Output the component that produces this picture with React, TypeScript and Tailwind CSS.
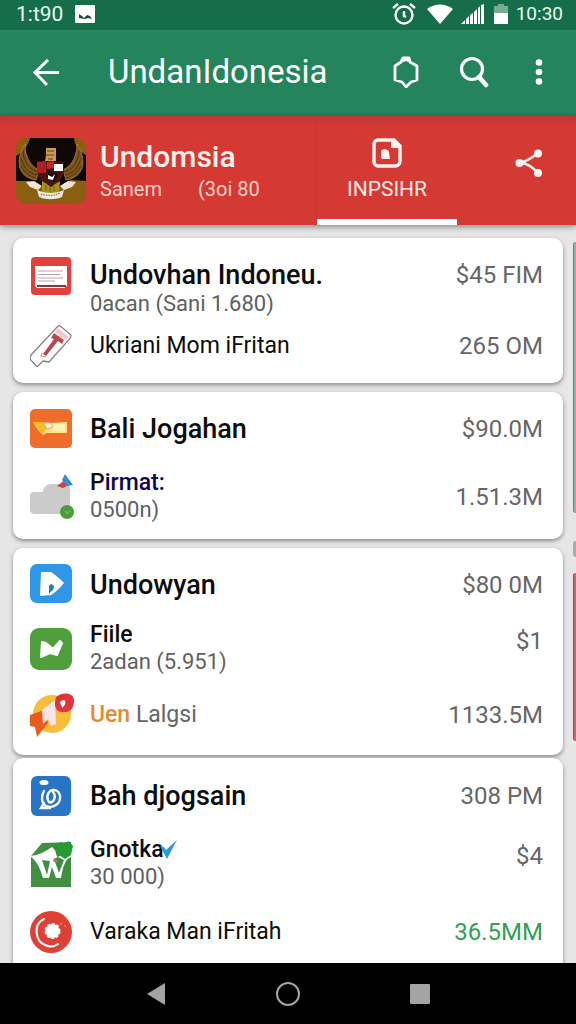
import type { ReactNode } from "react";
import clsx from "clsx";

type Row = {
  id: string;
  icon: ReactNode;
  title: ReactNode;
  subtitle?: string;
  amount: string;
  primary?: boolean;
  alignTop?: boolean;
  amountTop?: boolean;
  positive?: boolean;
  className?: string;
};

type CardGroup = {
  id: string;
  className: string;
  rows: Row[];
};

function GarudaEmblem() {
  return (
    <svg viewBox="0 0 70 66" className="h-[66px] w-[70px] shrink-0 rounded-[10px]" aria-hidden="true">
      <rect width="70" height="66" fill="#8a5f12" />
      <path d="M0 18C7 14 12 8 14 0h44c1 9 6 14 12 17v26L54 42 35 54 14 43H0z" fill="#0d0805" />
      <g fill="#7d551d" stroke="#bd8742" strokeWidth="0.7">
        <path d="M9 6C-1 22 1 39 20 42l3-10C13 27 9 17 9 6z" />
        <path d="M61 6c10 16 8 33-11 36l-3-10c10-5 14-15 14-26z" />
      </g>
      <g fill="none" stroke="#3f270a" strokeWidth="0.8">
        <path d="M7 13c1 12 6 18 15 21M5 20c2 9 7 15 16 17M5 28c4 7 8 10 15 12" />
        <path d="M63 13c-1 12-6 18-15 21M65 20c-2 9-7 15-16 17M65 28c-4 7-8 10-15 12" />
      </g>
      <path d="M30 10h10v13H29l1-6z" fill="#c79a4e" />
      <path d="M31 13h7M30 17h8M32 21h5" stroke="#6b4515" />
      <path d="M21 24l14-1 13 1v9c0 7-7 12-13 15-6-3-14-7-14-15z" fill="#4a120e" />
      <path d="M21 24l9-1v12h-9z" fill="#b51d24" />
      <path d="M31 24l7-1v7l-7 1z" fill="#cf2028" />
      <path d="M38 26h9v7h-9z" fill="#fff" />
      <path d="M31 31l6 3 5 2-3 8-6-3z" fill="#150b08" />
      <path d="M32 37l4 2 3-3-2 6-5-1z" fill="#fff" />
      <path d="M26 43l5 3 4 3 4-3 5-3-1 12H26z" fill="#a8901f" />
      <path d="M30 47v6M34 49v5M38 48v5" stroke="#6b5510" strokeWidth="0.8" />
      <path d="M10 44l8-1 8 5-4 4-8-3zM60 44l-8-1-8 5 4 4 8-3z" fill="#eee4cf" />
      <path d="M21 52c9 4 18 4 27 0l-2 7c-7 3-16 3-23 0z" fill="#eee9dc" />
      <path d="M25 56c6 2 13 2 19-1" fill="none" stroke="#8d8578" strokeWidth="1.4" strokeDasharray="1.5 1" />
    </svg>
  );
}

function RedDocumentIcon() {
  return (
    <svg viewBox="0 0 42 42" className="size-[42px]" aria-hidden="true">
      <rect x="1" y="1" width="40" height="38" rx="4" fill="#e2403b" />
      <path d="M5 10h32v20l-3 2H7l-2-2z" fill="#fff" />
      <path d="M8 15h25M8 18.5h22M8 22h25M8 25h17" stroke="#b9a4a7" strokeWidth="1" />
      <path d="M7 30h29" stroke="#74232e" strokeWidth="1.8" />
    </svg>
  );
}

function TicketIcon() {
  return (
    <svg viewBox="0 0 42 42" className="size-[42px]" aria-hidden="true">
      <path
        d="M29 0l12 10c0 4-4 6-6 9L19 37l-6-1-6 6-7-8 1-4z"
        fill="#fff"
        stroke="#85838a"
        strokeWidth="1.3"
        strokeLinejoin="round"
      />
      <path d="M28 3l11 9-4 3-10-8z" fill="#f0c9ce" />
      <path d="M24 8l10 7-2 4-4-3-12 15-3-2 11-15-3-1z" fill="#b54b50" />
      <path d="M12 28l-1 3 5 1" fill="none" stroke="#d9999c" strokeWidth="1.2" />
    </svg>
  );
}

function OrangeCardIcon() {
  return (
    <svg viewBox="0 0 42 42" className="size-[42px]" aria-hidden="true">
      <rect y="1" width="42" height="39" rx="5" fill="#f06c2b" />
      <path d="M3 14l18 1 16-1v11H17l-4 2-5-5z" fill="#ffe277" />
      <path d="M3 14h9l6 5-5 7-5-5z" fill="#f8bd22" />
      <path d="M23 15h12v8l-13 1z" fill="#fff2b5" />
      <path d="M14 16c3-3 8-1 9 3l-6 2z" fill="#fff5dc" stroke="#e1a078" />
    </svg>
  );
}

function CloudIcon() {
  return (
    <svg viewBox="0 0 44 46" className="h-[46px] w-[44px]" aria-hidden="true">
      <path d="M4 18h9c0-4 3-8 8-8h15c3 0 4 2 4 5v25H5c-3 0-5-2-5-4V22c0-3 1-4 4-4z" fill="#cbcbcc" />
      <path d="M27 12l8-6 4 5-6 3z" fill="#cf3e51" />
      <path d="M35 0l8 11-6 1-5-6z" fill="#3b8bd0" />
      <circle cx="37" cy="38" r="7" fill="#4a9c3b" />
      <path d="M35 37l2 2 3-2" fill="none" stroke="#72bd60" strokeWidth="1.5" />
    </svg>
  );
}

function PlayIcon() {
  return (
    <svg viewBox="0 0 42 42" className="size-[42px]" aria-hidden="true">
      <rect width="42" height="39" rx="7" fill="#2f97e5" />
      <path d="M11 8h10c5 3 9 7 13 11-4 5-8 9-13 12l-11 1z" fill="#fff" />
      <path d="M19 22c1-3 5-2 5 1 0 3-3 4-5 7z" fill="#227fbe" />
    </svg>
  );
}

function GreenMapIcon() {
  return (
    <svg viewBox="0 0 42 42" className="size-[42px]" aria-hidden="true">
      <rect width="42" height="42" rx="9" fill="#4fa03c" />
      <path
        d="M12 14l4 1 7 6 7-8 2 2-5 12-7-2-9 4z"
        fill="#fff"
        stroke="#fff"
        strokeWidth="2"
        strokeLinejoin="round"
      />
    </svg>
  );
}

function MegaphoneIcon() {
  return (
    <svg viewBox="0 0 45 44" className="h-[44px] w-[45px]" aria-hidden="true">
      <circle cx="22" cy="21" r="19" fill="#f8bd3b" />
      <path d="M0 22l14-5 4 13-11 14-2-10-5-1z" fill="#e85b1c" />
      <path d="M12 17L25 7l1 24-5 2-3-7-5 5z" fill="#f6e5e9" />
      <path d="M26 4c7-6 18-4 18 3 0 6-2 12-9 12-8 1-12-4-9-15z" fill="#e0333b" />
      <path d="M31 8c4-3 6 1 3 5l-2 2c0-3-3-4-1-7z" fill="#fff" />
    </svg>
  );
}

function BlueSwirlIcon() {
  return (
    <svg viewBox="0 0 42 42" className="size-[42px]" aria-hidden="true">
      <rect x="1" y="1" width="40" height="40" rx="6" fill="#2874c7" />
      <ellipse cx="14" cy="7.500" rx="4.500" ry="2.600" fill="#fff" />
      <path
        d="M14 16c-3 5-3 12 2 15 8 3 15-3 14-10-1-7-9-8-12-2-2 5 1 10 4 8 3-2 4-7 1-10M14 28l-3 5h9"
        fill="none"
        stroke="#fff"
        strokeWidth="2.4"
        strokeLinecap="round"
      />
    </svg>
  );
}

function GreenBagIcon() {
  return (
    <svg viewBox="0 0 43 48" className="h-[48px] w-[43px]" aria-hidden="true">
      <path d="M1 16L12 3l29-1v45H1z" fill="#418f42" />
      <path d="M0 16c10-1 16-5 22-9l3 3 2 7 14-4v4c-6 2-8 10-10 21h-5l-4-11-3 11h-6C10 28 7 21 0 16z" fill="#fff" />
      <path d="M12 20l5 15 3-14zM24 19l5 14 5-13-6-3z" fill="#3e8e41" />
      <path d="M23 7l8-5 3 2 5-3 4 5-2 9-6 4-6-4z" fill="#289a34" />
      <path d="M24 18l4 3-2 2-3-2z" fill="#b8716c" />
    </svg>
  );
}

function RedRecordIcon() {
  return (
    <svg viewBox="0 0 42 42" className="size-[42px]" aria-hidden="true">
      <circle cx="21" cy="21" r="21" fill="#df4036" />
      <path d="M14 8C3 13 5 30 15 34c4 2 9 2 13-1" fill="none" stroke="#fff" strokeWidth="2" strokeLinecap="round" />
      <circle cx="22.500" cy="20" r="7" fill="#fff" stroke="#fff" strokeWidth="2" strokeDasharray="3 1.6" />
      <circle cx="31" cy="13" r="1" fill="#f17d75" />
      <circle cx="35" cy="15" r="1" fill="#f17d75" />
    </svg>
  );
}

const groups: CardGroup[] = [
  {
    id: "undovhan",
    className: "pt-[18px] pb-4",
    rows: [
      {
        id: "undovhan-indoneu",
        icon: <RedDocumentIcon />,
        title: "Undovhan Indoneu.",
        subtitle: "0acan (Sani 1.680)",
        amount: "$45 FIM",
        primary: true,
        alignTop: true,
        amountTop: true,
      },
      { id: "ukriani", icon: <TicketIcon />, title: "Ukriani Mom iFritan", amount: "265 OM", className: "mt-[7px]" },
    ],
  },
  {
    id: "bali",
    className: "mt-[9px] pt-4 pb-[15px]",
    rows: [
      { id: "bali-jogahan", icon: <OrangeCardIcon />, title: "Bali Jogahan", amount: "$90.0M", primary: true },
      {
        id: "pirmat",
        icon: <CloudIcon />,
        title: (
          <span className="font-medium">
            P<span className="text-[#0b0657]">irmat:</span>
          </span>
        ),
        subtitle: "0500n)",
        amount: "1.51.3M",
        className: "mt-5",
      },
    ],
  },
  {
    id: "undowyan",
    className: "mt-[9px] pt-4 pb-[19px]",
    rows: [
      { id: "undowyan-main", icon: <PlayIcon />, title: "Undowyan", amount: "$80 0M", primary: true },
      {
        id: "fiile",
        icon: <GreenMapIcon />,
        title: <span className="font-medium">Fiile</span>,
        subtitle: "2adan (5.951)",
        amount: "$1",
        amountTop: true,
        className: "mt-4",
      },
      {
        id: "uen",
        icon: <MegaphoneIcon />,
        title: (
          <span className="text-[#666]">
            <span className="font-medium text-[#e58a32]">Uen</span> Lalgsi
          </span>
        ),
        amount: "1133.5M",
        className: "mt-[18px]",
      },
    ],
  },
  {
    id: "bah",
    className: "mt-[3px] pt-[17px] pb-5",
    rows: [
      { id: "bah-djogsain", icon: <BlueSwirlIcon />, title: "Bah djogsain", amount: "308 PM", primary: true },
      {
        id: "gnotka",
        icon: <GreenBagIcon />,
        title: (
          <span className="flex items-center font-medium">
            Gnotka
            <svg viewBox="0 0 18 20" className="-ml-1 h-5 w-[18px]" aria-hidden="true">
              <path d="M0 6c3 0 5 2 6 4L17 0 7 19z" fill="#2f96e0" />
            </svg>
          </span>
        ),
        subtitle: "30 000)",
        amount: "$4",
        amountTop: true,
        className: "mt-5",
      },
      {
        id: "varaka",
        icon: <RedRecordIcon />,
        title: "Varaka Man iFritah",
        amount: "36.5MM",
        positive: true,
        className: "mt-5",
      },
    ],
  },
];

function ListRow({ row }: { row: Row }) {
  return (
    <li className={clsx("flex", row.alignTop ? "items-start" : "items-center", row.className)}>
      <div className="flex h-[42px] w-[60px] shrink-0 items-center">{row.icon}</div>
      <div className={clsx("min-w-0 flex-1 whitespace-nowrap", row.alignTop && "pt-1")}>
        <p
          className={clsx(
            "text-[#0c0c0c]",
            row.primary ? "text-[27px] leading-[30px] font-medium" : "text-[23px] leading-[26px]",
          )}
        >
          {row.title}
        </p>
        {row.subtitle && <p className="text-[22px] leading-[28px] text-[#606060]">{row.subtitle}</p>}
      </div>
      <p
        className={clsx(
          "text-[24px] leading-[38px] whitespace-nowrap",
          row.amountTop && "self-start",
          row.positive ? "text-[#32a052]" : "text-[#666]",
        )}
      >
        {row.amount}
      </p>
    </li>
  );
}

function StatusBar() {
  return (
    <div className="flex h-[30px] shrink-0 items-center bg-[#166d49] pr-[13px] pb-[2px] pl-4 text-[21px] leading-[26px] text-[#e5fff0]">
      <span>1:t90</span>
      <svg viewBox="0 0 20 18" className="ml-3 h-[18px] w-5" aria-hidden="true">
        <rect width="20" height="18" rx="1" fill="#fff" />
        <path d="M4 13V9l3 2 2 2 3-3 3 1 2 3-4-1-3 1z" fill="#174d37" />
      </svg>
      <div className="ml-auto flex items-center">
        <svg viewBox="0 0 24 22" className="h-[22px] w-6" fill="none" stroke="#fff" strokeWidth="2.4" aria-hidden="true">
          <circle cx="12" cy="12" r="8.500" />
          <path d="M12 8v5l2 1M1 5l5-4M18 1l5 4" />
        </svg>
        <svg viewBox="0 0 26 20" className="ml-[11px] h-5 w-[26px]" aria-hidden="true">
          <path d="M0 5C8-1 18-1 26 5L13 20z" fill="#fff" />
        </svg>
        <svg viewBox="0 0 24 20" className="ml-2 h-5 w-6" fill="#fff" aria-hidden="true">
          <path d="M0 20l4-4v4zM5 15l3-3v8H5zM9 11l3-2v11H9zM13 8l3-3v15h-3zM17 4l2-2v18h-2zM20 1l3-1v20h-3z" />
        </svg>
        <svg viewBox="0 0 14 20" className="ml-[9px] h-5 w-3.5" aria-hidden="true">
          <path d="M0 2h4V0h6v2h4v8H0z" fill="#75ad93" />
          <path d="M0 9h14v11H0z" fill="#fff" />
        </svg>
        <span className="ml-2 text-[19px]">10:30</span>
      </div>
    </div>
  );
}

function AppBar() {
  return (
    <header className="flex h-[86px] shrink-0 items-center bg-[#24845c] pr-[29px] pb-[2px] pl-[33px] text-white">
      <button type="button" aria-label="Back">
        <svg viewBox="0 0 27 27" className="size-[27px]" fill="none" stroke="currentColor" strokeWidth="3" aria-hidden="true">
          <path d="M26 13.5H2M15 1L2 13.5 14 26" />
        </svg>
      </button>
      <h1 className="ml-12 flex-1 text-[33px] leading-10 whitespace-nowrap">UndanIdonesia</h1>
      <button type="button" aria-label="Apps">
        <svg
          viewBox="0 0 26 32"
          className="h-8 w-[26px]"
          fill="none"
          stroke="currentColor"
          strokeWidth="2.8"
          strokeLinejoin="round"
          aria-hidden="true"
        >
          <path d="M10 2h6l1 4 7 4v14l-6 2-5 5-4-5-7-2V10l6-4z" />
          <path d="M10 5l3-2 3 2" />
        </svg>
      </button>
      <button type="button" aria-label="Search" className="ml-10">
        <svg viewBox="0 0 30 32" className="h-8 w-[30px]" fill="none" stroke="currentColor" aria-hidden="true">
          <circle cx="13" cy="13" r="10.500" strokeWidth="3.2" />
          <path d="M20 21l7 8" strokeWidth="4.6" strokeLinecap="round" />
        </svg>
      </button>
      <button type="button" aria-label="More options" className="ml-[42px] flex w-4 justify-center">
        <svg viewBox="0 0 8 26" className="h-[26px] w-2" fill="currentColor" aria-hidden="true">
          <circle cx="4" cy="3.500" r="3.300" />
          <circle cx="4" cy="13" r="3.300" />
          <circle cx="4" cy="22.500" r="3.300" />
        </svg>
      </button>
    </header>
  );
}

function ProfileBar() {
  return (
    <section className="z-10 flex h-[109px] shrink-0 bg-[#d53933] bg-linear-to-b from-[#bd3831] to-[#d53933] to-10% text-white shadow-[0_2px_6px_rgba(0,0,0,0.4)]">
      <div className="flex flex-1 items-center pl-4">
        <GarudaEmblem />
        <div className="ml-[14px] flex-1 whitespace-nowrap">
          <h2 className="text-[30px] leading-[36px] font-medium text-[#fff0ec]">Undomsia</h2>
          <p className="flex gap-9 text-[20px] leading-[28px] text-[#ffd0c8]">
            <span>Sanem</span>
            <span>(3oi 80</span>
          </p>
        </div>
      </div>
      <button
        type="button"
        className="flex w-[140px] flex-col items-center border-b-[6px] border-white pt-[22px] text-[21px] leading-[30px] text-[#ffeae6] shadow-[-1px_0_0_#c9352f]"
      >
        <svg viewBox="0 0 30 30" className="mb-[6px] size-[30px]" aria-hidden="true">
          <path
            d="M6 2h16l6 6v15c0 3-2 5-5 5H6c-2 0-4-2-4-4V6c0-2 2-4 4-4z"
            fill="none"
            stroke="#fff4ef"
            strokeWidth="3.4"
          />
          <path d="M19 2h4l5 5v3h-9z" fill="#fff4ef" />
          <path d="M9 13c0-2 7-3 8 1l1 7h-7c-2 0-2-1-2-3z" fill="#fff4ef" />
        </svg>
        INPSIHR
      </button>
      <div className="flex w-[119px] items-center justify-center pb-4 pl-6">
        <button type="button" aria-label="Share">
          <svg viewBox="0 0 28 28" className="size-7" fill="#fff4ef" stroke="#fff4ef" aria-hidden="true">
            <path d="M23 4C17 9 12 12 5 14c8 0 13 5 18 10" fill="none" strokeWidth="2.4" />
            <circle cx="4.500" cy="14" r="4" stroke="none" />
            <circle cx="23" cy="4.500" r="4" stroke="none" />
            <circle cx="23" cy="24" r="4" stroke="none" />
          </svg>
        </button>
      </div>
    </section>
  );
}

function NavigationBar() {
  return (
    <nav className="z-10 flex h-[61px] shrink-0 items-center justify-center bg-black text-[#a5a3a4]">
      <button type="button" aria-label="Back" className="flex w-[132px] justify-center">
        <svg viewBox="0 0 18 22" className="h-[22px] w-[18px]" fill="currentColor" aria-hidden="true">
          <path d="M18 0v22L0 11z" />
        </svg>
      </button>
      <button type="button" aria-label="Home" className="flex w-[132px] justify-center">
        <span className="size-6 rounded-full border-2 border-current" />
      </button>
      <button type="button" aria-label="Recent apps" className="flex w-[132px] justify-center">
        <span className="size-5 rounded-[1px] bg-current" />
      </button>
    </nav>
  );
}

export default function App() {
  return (
    <div className="flex h-screen flex-col overflow-hidden bg-[#e6e6e7] font-[Roboto,sans-serif]">
      <StatusBar />
      <AppBar />
      <ProfileBar />
      <main className="flex min-h-0 flex-1 gap-[10px] overflow-hidden pt-[13px] pl-[13px]">
        <div className="flex-1">
          {groups.map((group) => (
            <ul
              key={group.id}
              className={clsx(
                "rounded-[10px] bg-white pr-5 pl-[17px] shadow-[0_2px_4px_rgba(0,0,0,0.4)]",
                group.className,
              )}
            >
              {group.rows.map((row) => (
                <ListRow key={row.id} row={row} />
              ))}
            </ul>
          ))}
        </div>
        <div className="w-[3px] shrink-0 pt-1" aria-hidden="true">
          <div className="h-[271px] rounded-l-md border-l border-[#71817e] bg-[#9badaa]" />
          <div className="mt-7 h-4 rounded-l-full bg-[#a5abaa]" />
          <div className="mt-4 h-[168px] rounded-l-md border-l border-[#b53c4e] bg-[#d8606d]" />
        </div>
      </main>
      <NavigationBar />
    </div>
  );
}
